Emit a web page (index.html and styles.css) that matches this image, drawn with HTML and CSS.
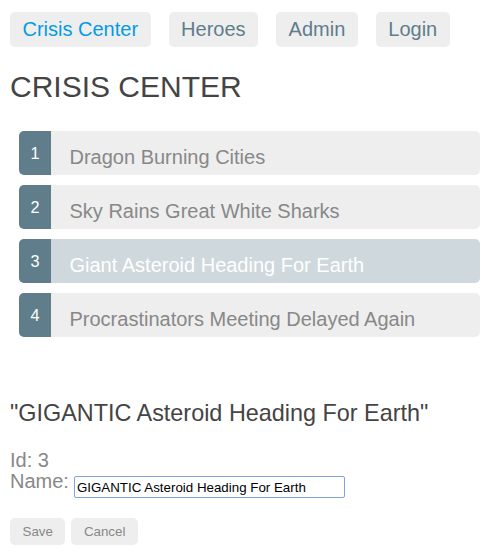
FILE: index.html
```html
<!DOCTYPE html>
<html>
<head>
<meta charset="utf-8">
<title>Crisis Center</title>
<link rel="stylesheet" href="styles.css">
</head>
<body>
<div class="page">
  <nav class="nav">
    <a class="nav-link active">Crisis Center</a>
    <a class="nav-link">Heroes</a>
    <a class="nav-link">Admin</a>
    <a class="nav-link">Login</a>
  </nav>
  <h2 class="title">CRISIS CENTER</h2>
  <ul class="crises">
    <li class="crisis"><span class="badge">1</span><span class="crisis-name">Dragon Burning Cities</span></li>
    <li class="crisis"><span class="badge">2</span><span class="crisis-name">Sky Rains Great White Sharks</span></li>
    <li class="crisis selected"><span class="badge">3</span><span class="crisis-name">Giant Asteroid Heading For Earth</span></li>
    <li class="crisis"><span class="badge">4</span><span class="crisis-name">Procrastinators Meeting Delayed Again</span></li>
  </ul>
  <div class="detail">
    <h3 class="detail-title">"GIGANTIC Asteroid Heading For Earth"</h3>
    <div class="row"><label>Id: </label>3</div>
    <div class="row name-row"><label>Name:</label><input class="name-input" type="text" value="GIGANTIC Asteroid Heading For Earth"></div>
    <div class="actions">
      <button class="btn">Save</button>
      <button class="btn">Cancel</button>
    </div>
  </div>
</div>
</body>
</html>
```
FILE: styles.css
```css
* {
  font-family: "Liberation Sans", Arial, Helvetica, sans-serif;
}
html, body {
  margin: 0;
  padding: 0;
  background: #fff;
}
.page {
  padding: 12px 10px 0;
}
.nav {
  display: flex;
  gap: 18px;
}
.nav-link {
  font-size: 20px;
  line-height: 23px;
  padding: 6px 12.5px;
  background-color: #eee;
  border-radius: 5px;
  color: #607D8B;
  text-decoration: none;
  cursor: pointer;
}
.nav-link.active {
  color: #039be5;
}
.title {
  margin: 23px 0 0;
  font-size: 30px;
  line-height: 34.5px;
  font-weight: normal;
  color: #444;
}
.crises {
  list-style: none;
  margin: 26px 0 0 9px;
  padding: 0;
  width: 461px;
  display: flex;
  flex-direction: column;
  gap: 10px;
}
.crisis {
  display: flex;
  height: 44px;
  background-color: #eee;
  border-radius: 5px;
  color: #888;
  font-size: 20px;
  cursor: pointer;
}
.crisis.selected {
  background-color: #CFD8DC;
  color: #fff;
}
.badge {
  flex: none;
  width: 32px;
  box-sizing: border-box;
  padding-top: 14.5px;
  font-size: 16.25px;
  line-height: 16px;
  text-align: center;
  color: #fff;
  background-color: #607D8B;
  border-radius: 5px 0 0 5px;
}
.crisis-name {
  margin: 15.5px 0 0 18.5px;
  line-height: 23px;
}
.detail-title {
  margin: 63px 0 0;
  font-size: 23.4px;
  line-height: 27px;
  font-weight: normal;
  color: #444;
}
.row {
  font-size: 20px;
  line-height: 21px;
  color: #888;
}
.detail-title + .row {
  margin-top: 23.5px;
}
.name-row {
  display: flex;
  align-items: flex-start;
}
.name-input {
  margin: 5.4px 0 0 5px;
  width: 271px;
  height: 22px;
  box-sizing: border-box;
  padding: 0 2px;
  border: 1px solid #7fa4e2;
  border-radius: 2px;
  font-size: 13.33px;
  color: #000;
  outline: none;
  background: #fff;
}
.actions {
  margin-top: 20px;
  display: flex;
  gap: 6px;
}
.btn {
  font-size: 13.33px;
  line-height: 15px;
  padding: 6px 12.5px;
  background-color: #eee;
  color: #888;
  border: none;
  border-radius: 5px;
  cursor: pointer;
}
```
